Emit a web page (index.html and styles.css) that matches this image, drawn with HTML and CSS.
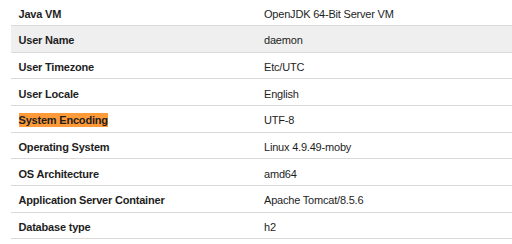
FILE: index.html
```html
<!DOCTYPE html>
<html>
<head>
<meta charset="utf-8">
<link rel="stylesheet" href="styles.css">
</head>
<body>
<div class="info">
  <div class="row"><div class="key">Java VM</div><div class="val">OpenJDK 64-Bit Server VM</div></div>
  <div class="row alt"><div class="key">User Name</div><div class="val">daemon</div></div>
  <div class="row"><div class="key">User Timezone</div><div class="val">Etc/UTC</div></div>
  <div class="row"><div class="key">User Locale</div><div class="val">English</div></div>
  <div class="row"><div class="key"><span class="hl">System Encoding</span></div><div class="val">UTF-8</div></div>
  <div class="row"><div class="key">Operating System</div><div class="val">Linux 4.9.49-moby</div></div>
  <div class="row"><div class="key">OS Architecture</div><div class="val">amd64</div></div>
  <div class="row"><div class="key">Application Server Container</div><div class="val">Apache Tomcat/8.5.6</div></div>
  <div class="row"><div class="key">Database type</div><div class="val">h2</div></div>
</div>
</body>
</html>
```
FILE: styles.css
```css
html, body {
  margin: 0;
  padding: 0;
  background: #fff;
}
body {
  font-family: "Liberation Sans", Arial, sans-serif;
  font-size: 11px;
  letter-spacing: -0.2px;
  color: #1e1e1e;
  padding-left: 11px;
  overflow: hidden;
}
.info {
  margin-top: -0.67px;
  display: flex;
  flex-direction: column;
}
.row {
  display: flex;
  height: 26.667px;
  box-sizing: border-box;
  border-bottom: 1px solid #dadada;
  align-items: center;
  padding-top: 3px;
}
.row.alt {
  background: #efefef;
}
.key {
  width: 245px;
  padding-left: 7.5px;
  box-sizing: border-box;
  font-weight: bold;
  flex: none;
}
.val {
  padding-left: 8px;
}
.hl {
  background: #ff9a38;
  padding: 1px 0 1px 0;
}
```
